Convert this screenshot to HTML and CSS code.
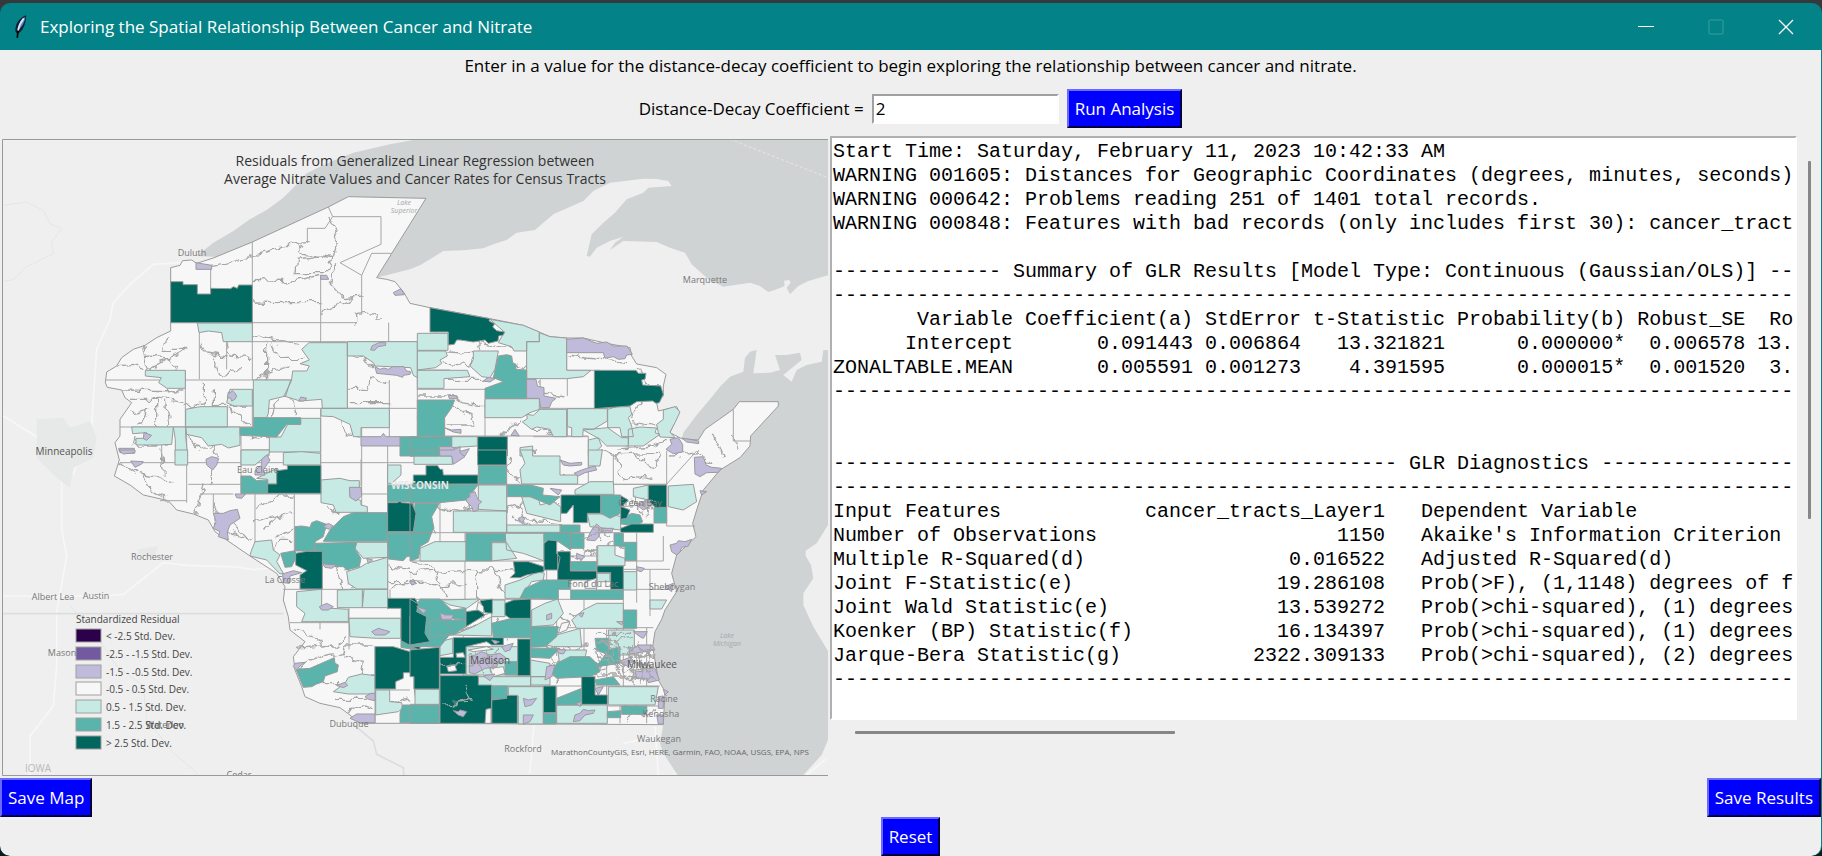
FILE: index.html
```html
<!DOCTYPE html>
<html lang="en">
<head>
<meta charset="utf-8">
<title>Exploring the Spatial Relationship Between Cancer and Nitrate</title>
<link rel="stylesheet" href="styles.css">
</head>
<body>
<div class="window">
  <header class="titlebar">
    <svg class="feather" viewBox="0 0 16 30" aria-hidden="true">
      <path d="M15 1C9 3 3 9 2 16c-1 4 0 7 2 8 6-2 11-12 11-23z" fill="#16202e"/>
      <path d="M14 3C8 7 5 12 4 20c5-3 9-9 10-17z" fill="#4f86d8"/>
      <path d="M12 5C8 10 6 15 5 20" fill="none" stroke="#dce9fa" stroke-width="2"/>
      <path d="M5 20L4 29" fill="none" stroke="#000" stroke-width="2"/>
    </svg>
    <h1 class="title">Exploring the Spatial Relationship Between Cancer and Nitrate</h1>
    <div class="window-controls">
      <button class="ctl" aria-label="Minimize"><svg viewBox="0 0 16 16"><path d="M0 7.500h16" stroke="#fff"/></svg></button>
      <button class="ctl" aria-label="Maximize" disabled><svg viewBox="0 0 16 16"><rect x="1" y="1" width="14" height="14" rx="1" fill="none" stroke="#3a9c9f"/></svg></button>
      <button class="ctl" aria-label="Close"><svg viewBox="0 0 16 16"><path d="M1 1l14 14M15 1L1 15" stroke="#fff" stroke-width="1.300"/></svg></button>
    </div>
  </header>

  <main class="content">
    <p class="intro">Enter in a value for the distance-decay coefficient to begin exploring the relationship between cancer and nitrate.</p>
    <form class="params">
      <label for="coef">Distance-Decay Coefficient =</label>
      <input id="coef" class="entry" type="text" value="2">
      <button type="button" class="btn">Run Analysis</button>
    </form>

    <div class="panes">
      <svg class="map" viewBox="2 139 826 637" role="img" aria-label="Residual map of Wisconsin census tracts">
        <defs>
          <filter id="rough" x="-5%" y="-5%" width="110%" height="110%">
            <feTurbulence type="fractalNoise" baseFrequency="0.035" numOctaves="2" seed="4"/>
            <feDisplacementMap in="SourceGraphic" scale="34" xChannelSelector="R" yChannelSelector="G"/>
          </filter>
        </defs>
        <rect class="land" x="2" y="139" width="826" height="637"/>

        <g transform="translate(410 136) scale(.33333)">
          <path class="water" d="M-640 360L-590 320-530 285-480 250-430 222-380 185-340 145-310 112-240 78-170 50-60 25 30 8H1254V418L1195 435 1165 450 1140 475 1130 455 1142 440 1138 432 1122 434 1124 450 1100 460 1075 468 1050 450 1020 440 940 452 895 430 845 385 825 350 780 335 740 318 640 315 600 342 615 320 640 302 600 315 560 335 540 362 530 360 545 295 580 260 615 230 650 190 700 170 715 155 785 150 775 135 740 129 700 128 600 140 550 165 520 195 430 235 400 260 375 282 320 290 290 312 250 325 220 337 160 343 100 345 60 370 30 388 0 400-100 425-200 380z"/>
          <path class="ferry" d="M960 10L1254 125"/>
        </g>
        <g transform="translate(410 450) scale(.33333)">
          <path class="water" d="M820-52L860-105 900-152 930-190 960-220 1000-235 1005-277 1020-295 1040-300 1030-230 1080-232 1110-240 1095-285 1130-285 1170-292 1175-270 1120-225 1145-205 1160-240 1190-255 1235-265 1240-300H1254V225L1220 280 1187 302 1187 318 1203 345 1210 385 1180 430 1180 465 1210 530 1254 603V870L1235 915 1180 975H803L760 910 750 880 760 822 700 600 760 200z"/>
          <path class="road wide" d="M372 825l-5 60-8 85M640 880l90-20M735 830l10 145M400 905l-50-10M1190 975l60-50"/>
        </g>
        <g transform="translate(0 136) scale(.33333)">
          <path class="river" d="M10 208l70-10 50 25 20 40 35 15-30 40 5 35-60 30-20 8-40 40-30 5"/>
          <path class="road wide" d="M540 380l-80 5-70 60-50 55-10 50-40 90-8 120-10 150M10 840l120 75 90-10 40-20M10 1380h300l60-5 120-95 70 8 150 5 50 8 80-8M185 950l0 230 15 80-30 170 0 160-10 120-70 90v150M195 1010l-60-20-5-60M260 905l-40 110M220 890l60-40"/>
          <path class="city" d="M110 850l80-5 20 30 60-20 20 50-10 60-60 30-10 60-40-30-60-60zM415 1240l60-10-10 30-50-5z"/>
          <path class="river" d="M210 1410l60 60 80 120 80 60 10 100 80 100 70 60 0 50 60 20 30 50"/>
          <path class="border" d="M10 1433H850"/>
          <path class="border" d="M1060 1765l60 50 10 40 80 40 5 70"/>
        </g>

        <g transform="translate(0 136) scale(.33333)">
          <path class="tract w" d="M512 395L540 388 548 374 575 372 590 382 640 366 757 318 985 213 1045 182 1278 187 1130 425 1160 430 1185 437 1212 470 1230 502 1290 515 1470 548 1570 568 1650 602 1700 606 1750 606 1820 622 1890 635 1895 660 1910 684 1970 695 1998 715 1990 750 1990 780 1970 800 1975 825 2030 812 2038 828 2010 890 2045 908 2095 912 2115 880 2200 820 2218 797H2335V810L2252 900 2250 930 2220 965 2160 1002 2110 1062 2090 1122 2078 1162 2088 1202 2030 1257 2015 1312 2030 1367 1995 1422 1985 1450 1965 1487 1958 1532 1975 1632 1995 1667 1990 1766 1230 1762H1080L1050 1737 1020 1715 960 1702 915 1682 905 1652 885 1602 880 1562 915 1517 870 1482 865 1442 850 1392 855 1352 830 1312 750 1260 680 1212 645 1187 625 1152 580 1134 530 1122 505 1094 430 1077 390 1047 343 1020 358 972 345 920 360 900 360 850 395 800 375 785 365 762 322 754 316 740 320 708 350 690 365 665 400 640 435 628 470 605 512 585z"/>
        </g>

        <g class="lines" transform="translate(0 136) scale(.33333)">
          <path d="M757 318V732M512 560H1070M632 388V474M962 418V622M1085 418V535M757 617H1040M1042 617V817M1166 560V617M1042 617H1290M556 703V880M556 732H1042M318 732H556M598 590V730M680 617V700M757 760V873M360 873H760M762 817H1250M962 817V1070M1168 732V902M1085 875V1130M485 900V980M560 873V1100M360 980H725M723 873V1074M725 980H1250M725 1074H963M565 1045H723M765 1074V1220M883 1074V1250M640 1074V1130M963 1074H1163M1163 930V1420M1083 970V1050M560 1094H480M1163 1188H1030M962 1245V1360M850 1360H1163M1047 1415V1540M870 1460H1047M1047 1447H1202M1125 1532V1762M960 1480V1440M1087 1360V1415M1170 1360V1415M1125 1662H1230M985 213L998 242H1143V325L1020 380 1085 418 1115 352H1175M998 242L975 277H922V320M545 873V960M600 1074H700"/>
          <path d="M1252 617V900M1310 590V617M1250 702H1350M1250 760H1455M1455 790V900M1250 845H1330M1580 617V700M1700 606V703H1800M1784 703V820M1455 817H1825M1702 817V900M1702 703V780M1600 902H1765V1045M1290 900H1765M1522 902V960M1840 960V1045H2000M2000 945V1170M1885 880V940M2200 820V915H2250M1995 1050L2090 945M2000 1170H2085M1230 1045H2000M1320 1045V1230M1520 1045V1200M1435 1190H1860M1230 1190H1520M1395 1190V1390M1230 1275H1640M1910 1190V1400M1990 1200V1275H1840M1640 1190V1390M1790 1230V1390M1710 1260H1840M1870 1300H2010M1950 1300V1440M1230 1390H1870M1870 1360H2020M1592 1390V1760M1670 1390V1560M1870 1390V1660M1320 1390V1762M1390 1500V1700M1475 1620V1762M1320 1650H1980M1590 1475H1960M1752 1380V1700M1820 1480V1762M1940 1475V1762M1550 1650V1762M1670 1650V1762M1230 1705H1320M1820 1710H1985M1860 1650V1762M1910 1535V1600"/>
        </g>
        <g class="lines rough" transform="translate(0 136) scale(.33333)">
          <path d="M635 388L690 380 757 362 850 330 920 322M885 410L890 370 960 360 1000 365 1015 290 985 240M757 430L880 435 962 418M757 498L860 500 962 500M895 325L910 355 995 365 985 410 885 410M1010 385L990 440 1030 485 1085 480M965 530L1010 510 1060 485M1070 560V535L1125 530V555H1150M430 630L445 700 556 640M435 660L500 665 530 700M500 610L490 640 556 640M350 690L400 685 430 700M365 762L556 765M390 790L480 790 556 800M470 790V873M395 830L440 820 420 873M500 800L510 870M600 620L610 650 680 660M640 660L660 720 720 700M680 617L690 660 757 665M757 600L820 610 900 625M800 620V730M820 620L840 670 910 670M757 730L830 700 870 690M610 740V800L557 810M640 760L640 812 757 810M683 815L750 870M830 790L810 845M875 790L890 840M1050 660L1080 660 1120 690M1042 760L1100 760 1110 730 1168 740M1042 800L1168 800M1010 845L1040 890 1080 900M405 900L400 930 500 930M565 900L600 940 640 930 650 970M725 900L810 905M610 1040L590 1130M358 975L410 1010 470 1020 520 1040M430 1010L450 1060 500 1090M640 980V1045M480 940L490 1010M650 1100L640 1170 740 1210 765 1200M765 1120L830 1080 880 1080M765 1160L840 1140 880 1130M790 1180L830 1150M740 1210L700 1160M830 1200L880 1180M810 1240L850 1210 880 1210M985 1110L1010 1140M1000 1280L1030 1360M1060 1360L1040 1300M885 1540L1000 1530 1047 1510M900 1590L960 1560 1030 1550 1040 1530 1120 1530M1030 1560L1090 1580 1080 1620 1120 1620M1010 1690L1060 1690 1125 1690M960 1640L1020 1640M1040 1720L1090 1710 1125 1720M1140 1690L1200 1700 1230 1690M1180 1360L1230 1330M1163 1290L1230 1300M1160 1340L1230 1340M880 1480L960 1500 970 1530"/>
          <path d="M1340 645L1440 650 1430 620 1530 640M1320 680L1410 690 1430 660M1340 730L1460 730 1480 720M1250 780L1350 780 1380 800 1455 810M1340 800L1410 830 1415 870 1340 870M1580 700L1545 690M1620 730L1620 770 1700 780M1705 660L1880 680M1915 700L1940 745 1980 750M1890 850L1930 800M1890 860L1980 875M1590 880L1660 880 1650 900M1500 900L1560 850M1850 940L1960 930 2000 910M1810 940L1830 960 1980 955M1850 960L1870 1040 1900 1020 1960 1030M1900 960L1960 990 1980 960M2130 900L2150 915 2170 960M2200 900L2220 940M2010 960L2100 950 2130 990M1530 960L1520 1000 1560 1040M1600 940V1015L1700 1020M1300 1110L1380 1130 1440 1110 1520 1120M1400 1110L1420 1180M1290 1140L1300 1190M1520 1120L1590 1090 1680 1100M1560 1100L1570 1150 1680 1160M1530 1140L1600 1180 1680 1170M1230 1280L1300 1290 1340 1390M1230 1310L1400 1300 1540 1305M1240 1335L1310 1350 1400 1345M1430 1300L1430 1390M1480 1300L1500 1350 1520 1380M1680 1250L1740 1270 1790 1240M1740 1200L1760 1260 1840 1220M1850 1220L1900 1260M1240 1390L1260 1440 1320 1470 1400 1450M1390 1450L1480 1430 1520 1510M1360 1490L1480 1460M1600 1430L1680 1440 1720 1470M1650 1430L1660 1520 1720 1550M1700 1430L1800 1470M1620 1520L1700 1560 1760 1520M1780 1470L1850 1470 1860 1530M1600 1590L1700 1570 1780 1600M1650 1540L1670 1640M1720 1590L1760 1640 1820 1590M1790 1540L1800 1620 1870 1620M1830 1520L1850 1600 1900 1640M1880 1500L1900 1560 1940 1560M1900 1520L1930 1600 1940 1620M1870 1580L1940 1590M1870 1600L1940 1610M1880 1620L1950 1635M1890 1560L1900 1650M1920 1550L1925 1640M1790 1560L1870 1590M1780 1590L1870 1570M1250 1600L1320 1590M1330 1640L1400 1620 1480 1600M1260 1590L1310 1650M1400 1590L1480 1560M1410 1560L1500 1580M1540 1700L1640 1690M1690 1690L1760 1670M1700 1740L1800 1720M1850 1700L1930 1740 1970 1720M1870 1690L1970 1690M1880 1750L1910 1700M1560 1670L1580 1750M1600 1670L1590 1710"/>
        </g>

        <g transform="translate(0 136) scale(.33333)">
          <path class="tract m" d="M592 561H757V617H670L665 590 625 585 597 590zM436 703H556V757H501L476 740 484 725 436 720zM690 760H757V810H702L680 800zM927 620H1042V817H967L965 790 900 795 852 780 874 735 878 705H920L928 690 900 683 928 672 905 640zM760 732H872L857 780 808 792 805 832 800 845H760zM1042 617H1252V725L1240 718 1232 695 1125 690 1120 680 1090 660H1042zM557 820L600 812H682V873H557zM395 873H520L515 925 480 927H408V907H440V890L398 893zM520 873H557V900L563 960H526V910zM557 873H720V928L685 936 665 925 625 930 605 905 560 895zM902 847H962V948H808V903H843L863 865H902zM963 817H1168V875H1083V902H1060L1050 865 1000 842 963 840zM725 942H807V960H725z"/>
          <path class="tract t" d="M760 845H902V865H860L830 903 720 898V874H760zM1200 902H1260V960H1200z"/>
          <path class="tract d" d="M512 437H549V446H592V474H632V457L692 458 700 452 712 457 716 447H757V560H512z"/>
          <path class="tract p" d="M588 380L635 388V400H588zM962 418H980L986 430H962zM1180 470L1203 458 1213 476 1185 478zM1112 642L1116 630 1137 620H1157V628L1134 632 1124 643zM1125 692L1140 700 1152 696 1165 700 1178 692 1212 692 1218 704 1233 708 1230 715 1210 718 1208 724 1190 718 1130 712zM685 768L690 772 697 763 704 770 710 780 705 790 695 795 692 786 682 785zM895 795L903 783 921 787 912 795zM1083 902H1143L1150 892 1158 902H1200V930H1083zM356 937H403V952L360 950zM432 890L455 898 440 913 430 908z"/>
        </g>

        <g transform="translate(410 136) scale(.33333)">
          <path class="tract m" d="M22 592H114V643H22zM240 550L340 568 388 588V617H350V645H312L305 632 265 620 283 588zM350 617H388V590L420 602 470 606V703H543L520 722 470 728H350zM22 645H107L112 660 90 672 95 682 77 695 22 702zM22 703H172L180 722 102 728V757H22zM190 645H265L255 700 240 725 215 722 180 690 190 670zM225 788H388V820L360 830 335 845H225zM337 858L352 848 350 835 370 838 390 820H470V902H430L420 880 380 873 365 880zM472 818H592V855L550 880 520 878 518 902H485V875L472 872zM593 820L620 812 660 812 665 835 655 845 665 870 670 902H635L630 875H593zM520 882L593 875 635 905 655 905V930H590L570 910zM655 880L690 873 740 876 735 890 750 895 700 930H655zM745 890L740 865 760 850 760 822 795 812 810 828 795 860 780 888 795 905 750 903zM125 902H202V930L125 935zM535 912L565 905 575 930 560 945V960H535zM330 935L368 930V960H330z"/>
          <path class="tract t" d="M265 660L290 656 305 660 308 680 318 685 318 700 350 702V788H225V757L280 737 250 725 258 690zM22 792H134L125 815 104 845V900H22zM0 902H125V932H88V960H0z"/>
          <path class="tract d" d="M60 515L240 548 237 555 254 563 248 573 260 584 284 588 280 597 266 600 264 615 235 622 225 612 190 618 150 612 140 612 133 625 115 627V588H60zM553 703H678L685 712 708 712 705 730 695 732 698 747 752 750 760 775 748 800 738 802 728 795 680 797 660 810 553 818zM203 902H292V960H203z"/>
          <path class="tract p" d="M470 610L520 606 560 622 590 618 610 630 650 630 658 640 667 655 650 657 645 668 625 670 610 662 585 667 580 650H470zM350 730H378L382 750 402 755 402 780 438 787 425 798 418 815H392L388 787H350zM88 932H125L140 942 155 945 178 938 165 960H88zM768 940L785 925 780 910 805 905 818 925V948L790 953zM815 906L866 915V923L830 918zM115 778L142 780 140 788H118zM105 876L125 882 153 880V892L130 888zM303 898L315 880 328 900zM220 735L235 724 255 728 240 738z"/>
        </g>

        <g transform="translate(0 450) scale(.33333)">
          <path class="tract m" d="M525 0H563V45H525zM723 0H808V10L765 45H723zM850 8L905 5 962 10V45H850zM770 85L830 55V102H803V88zM963 90L1020 85 1050 92 1078 92V115H1050V140L1083 152V165L1102 170V187H1008L1000 165 963 158zM1163 45H1203V75L1175 100H1163zM753 305L765 275 815 270 820 300 840 315 830 335 850 370 840 372 800 330 750 318zM1070 277H1163V322L1090 325 1065 295zM1040 365L1080 352 1100 340 1163 322V417H1070L1045 400zM890 425L965 418V473L1045 478V515H905L915 490 890 470zM1012 420L1087 418V473H1012zM1092 418H1163V473H1087zM1047 505H1202V565H1130L1050 560zM1000 725L1035 700 1045 682 1085 672 1125 677V732H1045zM1127 720H1169V755L1205 758 1208 775 1195 785 1127 795zM1243 720H1260V765H1250z"/>
          <path class="tract t" d="M723 78H752L770 92 803 90V130H723zM1030 200L1060 188H1163V274H970L990 240zM885 230L905 228 930 232 935 218 950 212 985 225 975 240 970 260 945 275 945 303H885zM945 280L1070 277 1065 297 1083 325 1078 350 1040 360 1030 350 1010 350 967 340V305L945 302zM1163 247H1260V312L1220 320 1210 332 1165 327zM1163 105H1260V155H1163zM842 310L885 302 890 320 875 350 855 352zM888 658L930 655 1003 623 1005 640 1015 645 1012 665 975 678 970 695 950 702 935 710 910 712zM1203 572H1260V602L1203 592zM1208 765H1260V818H1200V790z"/>
          <path class="tract d" d="M803 102H830V62L862 58V46H963V130H803zM887 310L920 304H967V417H900V375L920 362 887 345zM1163 158H1190L1200 154 1205 158 1240 160 1238 180 1250 190 1245 210 1238 245H1163zM1163 445H1245L1260 470V602L1203 572V475H1163zM1125 590H1180L1230 605 1260 602V718H1242V668H1210V685L1187 695V717H1125z"/>
          <path class="tract p" d="M618 28L635 20 656 25 650 45 638 60 620 45zM392 33L430 35 425 42 405 52zM356 0H405V8L370 12zM765 62L785 45 785 28 800 15 810 30 800 45 790 60 795 75 765 75zM640 190L670 190 690 182 712 178 720 205 690 225 682 245 685 270 655 260 660 245 640 235 648 215zM705 132H737L725 145 710 143zM1048 112L1083 112 1085 138 1068 153 1050 142zM970 230L985 220 1000 228 987 238zM968 342L1010 345 995 355 975 352zM958 470L980 460 1000 470 985 480 965 480zM1115 545L1135 535 1170 545 1155 555 1125 555zM880 650L885 640 915 637 900 648 890 660zM1050 805L1070 792H1125V818H1080zM1095 740L1112 730H1125V752L1105 748zM1010 706L1035 697 1043 706 1030 713zM848 372L880 362 905 368 870 378 868 400 850 398zM1228 395L1240 388 1247 398 1237 405zM1100 325L1118 330 1105 340z"/>
        </g>

        <g transform="translate(410 450) scale(.33333)">
          <path class="tract m" d="M12 18H127V43H12zM205 105H290V183L205 178zM130 183H290V247H130zM290 225H450V247H290zM330 0H368V18H450V75H503V102H335L330 60 345 40zM535 0H577L570 48H535zM495 120L540 95 610 95 612 133H495zM335 140H385L390 165 430 155 452 170V215L350 190zM670 115L715 105V150L670 140zM775 108L850 103 860 155 820 180 775 170zM532 192H605L632 200V240L540 230zM30 295L75 275H168V333H30zM285 250H402V333L340 310 290 300zM245 278H290L320 325 245 333zM563 287H615V315L645 325V347H563zM640 365H680V420H640zM285 405L330 390 385 365 403 370 400 390 365 395 330 445H285zM245 450H285V500H245zM90 450L210 447 170 475 120 465zM365 480L405 460 443 447 460 490 430 525 365 530zM485 510L520 480 560 460H640V535H500zM720 450H770L755 477H720zM90 575L128 565V610L90 617zM130 555L190 530 245 500V558zM168 590H323V675H168zM410 585L440 555 510 535 515 590H430zM443 600L530 600 520 650H450zM205 680H362V708H205zM362 680H420V705H362zM15 718H88V763H15zM295 710H400V822H325V738H295zM440 765H592V820H440zM595 710H745L735 765H595zM595 540H673V615H600zM362 630L420 640 415 680H362zM561 370H600V395H561z"/>
          <path class="tract t" d="M0 0H88V18H0zM205 47H290V102H205zM0 103H205L170 150 88 158H0zM15 160H88L65 200 72 235 65 248H8zM292 105H362L400 115 398 135 450 140 420 165 360 140H292zM572 135H632V190L600 205 572 190zM732 172H770V219H732zM632 210L665 190 690 195 698 215 680 227 632 222zM452 225H510V247H452zM0 248H65L55 275 30 290 25 325 0 333zM168 250H286V275H245V333H168zM402 248H482V300L445 275H402zM482 250H522V295H482zM612 250H640V277H680V332H645V290L612 287zM482 335H560V362H482zM330 445L345 415 400 390H482V418H445V448zM482 420H640V448H482zM640 480H680V535H640zM30 447H90L125 480 168 475V510L90 500 130 540 90 590H0V500zM60 510H165L180 520 130 555 60 560zM245 520L305 505H362V563H250zM362 530H445L440 560 405 590 362 592zM362 595H450L420 625 362 622zM440 640L480 620H540L560 640 570 665 540 680 440 685 425 670zM285 635H323V675H285zM245 708H292V748H245zM440 745L515 715V765H440zM400 790H438V822H400zM555 565H595V615L560 600zM595 600L630 590V640L560 650zM0 765H88V820H0zM635 768H710V793H635zM592 785L632 782V803H592zM555 690L610 680 630 705H560z"/>
          <path class="tract d" d="M203 0H290V45H203zM10 75H48V47H83L90 58 98 58 100 75H204V102H10zM0 158L8 165 18 190 10 245H0zM453 135H572V190H532V218H490V165L470 190H453zM715 105H770V172H735L715 150zM632 137L655 150 635 170 660 180 650 205 632 208zM632 235L665 222H730V247H632zM402 280L415 270 440 272V310L450 322 443 360H402zM310 335L355 335 402 350V365L350 375 330 383H300L315 370zM443 305H481V363H560V390H443zM561 348H640V418H602V368H561zM210 452L247 447V490L225 488zM285 460L310 450 362 447V505H300L285 495zM168 485L205 480 225 495 168 530zM0 447L25 462 20 485 50 500 45 550 60 575 0 585zM130 563H280V585H245L230 575 168 590V672H90V622H130zM323 567H361V677H323zM0 600L88 592V717H12V680H0zM90 677H205V705H245V820H90zM245 750L290 745V736H322V820H245zM400 708H438V788H400zM515 680H555V735H592V763H515z"/>
          <path class="tract w" d="M138 610L160 608 165 622 140 622zM110 648L135 645 140 662 115 665zM228 778L243 775V820H225zM205 455L220 470 222 490 200 478zM455 520L480 515 470 540 445 550zM525 395L560 385V415H525zM175 600L230 590 250 598 190 605zM240 655L280 650 285 670 250 680z"/>
          <path class="tract p" d="M88 0H130L150-10 150 8 165 20 150 30 130 43 125 18H90zM170 145L180 140 178 130 195 125 200 140 205 150 215 155 205 165 205 180 190 185 185 170 170 155zM450 30L480 40 515 37V45L480 48 460 45zM492 70L510 62 530 55 555 48 560 60 525 68 505 78zM853 22L880 20 888 45 905 52 935 55 925 67 890 68 870 80 855 72zM780 285L800 280 805 272 825 275 845 268 835 288 815 292 810 305 800 315 785 305zM560 222L575 235 610 235 605 248 570 248 565 262 555 272 530 270 545 240zM680 350L703 355 695 365 682 362zM500 310L525 320 515 328 500 325zM340 745L355 750 380 745 365 765 345 770zM340 795L370 795 360 815 340 822zM495 795L510 790 520 778 535 782 555 780 550 790 525 795 510 812 490 815zM130 782L145 785 150 780 170 785 160 800 145 795zM90 488L105 495 130 495 125 508 95 508zM20 470L50 480 40 490zM178 620L195 615 215 605 240 615 270 610 290 625 265 640 260 650 225 655 195 672 178 668zM410 650L435 645 425 680 405 690zM275 590L310 580 300 600 285 605zM325 205L335 200 345 205 335 220zM420 115L455 120 445 135zM680 165L710 150 725 165 700 180zM655 590L670 595 685 585 725 585 735 600 705 605 660 612zM675 662L695 665 705 655 735 655 748 690 715 698 710 685 680 685zM625 635L665 620 655 650zM745 740L760 738V775H745zM740 795H760V822H745zM410 495L425 490 425 505 410 510zM505 492L522 488 515 502zM220 678L255 672 240 692zM500 760L515 755 510 770zM440 598L468 600 460 612 448 610zM245 570L268 575 255 582zM670 545L712 545 700 565 690 560zM765 410L790 400 785 425zM760 718L775 725 765 735zM555 715L580 710 565 735zM620 515L640 515 635 525zM0 390L20 400 5 405zM870 122L890 125 875 135z"/>
        </g>
        <g class="lines rough" transform="translate(410 450) scale(.33333)">
          <path d="M175 620L290 640M180 650L270 600M200 605L215 670M230 600L240 665M260 610L250 655M550 600L640 640M560 570L640 600M570 620L630 660M600 560L610 640M640 590L730 600M645 610L730 625M650 630L735 650M660 655L735 665M660 580L670 690M690 570L700 690M715 580L725 690M670 680L735 690M585 600L600 650M620 570L640 670M540 230L600 260M560 220L570 270M520 260L610 245M655 150L730 180M670 140L690 190M700 140L710 200M640 170L730 160M560 550H660M565 580L660 560M90 645L165 640M165 760L100 765M165 705L180 745 130 770"/>
        </g>

        <g class="legend">
          <rect class="d3" x="76" y="629" width="25" height="13"/>
          <rect class="d2" x="76" y="647" width="25" height="13"/>
          <rect class="p" x="76" y="665" width="25" height="13"/>
          <rect class="w" x="76" y="682" width="25" height="13"/>
          <rect class="m" x="76" y="700" width="25" height="13"/>
          <rect class="t" x="76" y="718" width="25" height="13"/>
          <rect class="d" x="76" y="736" width="25" height="13"/>
        </g>

        <g class="heading">
          <text x="415" y="166">Residuals from Generalized Linear Regression between</text>
          <text x="415" y="184">Average Nitrate Values and Cancer Rates for Census Tracts</text>
        </g>
        <g class="place">
          <text x="192" y="256">Duluth</text>
          <text x="705" y="283">Marquette</text>
          <text x="152" y="560">Rochester</text>
          <text x="53" y="600">Albert Lea</text>
          <text x="96" y="599">Austin</text>
          <text x="62" y="656">Mason</text>
          <text x="285" y="583">La Crosse</text>
          <text x="258" y="473">Eau Claire</text>
          <text x="349" y="727">Dubuque</text>
          <text x="165" y="728">Waterloo</text>
          <text x="523" y="752">Rockford</text>
          <text x="659" y="742">Waukegan</text>
          <text x="664" y="702">Racine</text>
          <text x="661" y="717">Kenosha</text>
          <text x="672" y="590">Sheboygan</text>
          <text x="593" y="587">Fond du Lac</text>
          <text x="640" y="506">Green Bay</text>
          <text x="239" y="778">Cedar</text>
        </g>
        <g class="place big">
          <text x="64" y="455">Minneapolis</text>
          <text x="490" y="664">Madison</text>
          <text x="652" y="668">Milwaukee</text>
        </g>
        <g class="lake">
          <text x="404" y="205">Lake</text>
          <text x="404" y="213">Superior</text>
          <text x="727" y="638">Lake</text>
          <text x="727" y="646">Michigan</text>
        </g>
        <text class="state" x="38" y="772">IOWA</text>
        <text class="state light" x="420" y="489">WISCONSIN</text>
        <g class="key">
          <text x="76" y="623">Standardized Residual</text>
          <text x="106" y="640">&lt; -2.5 Std. Dev.</text>
          <text x="106" y="658">-2.5 - -1.5 Std. Dev.</text>
          <text x="106" y="676">-1.5 - -0.5 Std. Dev.</text>
          <text x="106" y="693">-0.5 - 0.5 Std. Dev.</text>
          <text x="106" y="711">0.5 - 1.5 Std. Dev.</text>
          <text x="106" y="729">1.5 - 2.5 Std. Dev.</text>
          <text x="106" y="747">&gt; 2.5 Std. Dev.</text>
        </g>
        <text class="credit" x="551" y="755">MarathonCountyGIS, Esri, HERE, Garmin, FAO, NOAA, USGS, EPA, NPS</text>
        <path class="frame" d="M828 139.500H2.500V775.500H828"/>
      </svg>

      <div class="results">
        <textarea class="output" rows="24" wrap="off" readonly aria-label="Analysis results">Start Time: Saturday, February 11, 2023 10:42:33 AM
WARNING 001605: Distances for Geographic Coordinates (degrees, minutes, seconds)
WARNING 000642: Problems reading 251 of 1401 total records.
WARNING 000848: Features with bad records (only includes first 30): cancer_tract

-------------- Summary of GLR Results [Model Type: Continuous (Gaussian/OLS)] --
--------------------------------------------------------------------------------
       Variable Coefficient(a) StdError t-Statistic Probability(b) Robust_SE  Ro
      Intercept       0.091443 0.006864   13.321821      0.000000*  0.006578 13.
ZONALTABLE.MEAN       0.005591 0.001273    4.391595      0.000015*  0.001520  3.
--------------------------------------------------------------------------------


----------------------------------------------- GLR Diagnostics ----------------
--------------------------------------------------------------------------------
Input Features            cancer_tracts_Layer1   Dependent Variable             
Number of Observations                    1150   Akaike's Information Criterion 
Multiple R-Squared(d)                 0.016522   Adjusted R-Squared(d)          
Joint F-Statistic(e)                 19.286108   Prob(&gt;F), (1,1148) degrees of f
Joint Wald Statistic(e)              13.539272   Prob(&gt;chi-squared), (1) degrees
Koenker (BP) Statistic(f)            16.134397   Prob(&gt;chi-squared), (1) degrees
Jarque-Bera Statistic(g)           2322.309133   Prob(&gt;chi-squared), (2) degrees
--------------------------------------------------------------------------------
</textarea>
        <div class="vtrack"><div class="vthumb"></div></div>
        <div class="htrack"><div class="hthumb"></div></div>
      </div>
    </div>

    <div class="save-row">
      <button type="button" class="btn">Save Map</button>
      <button type="button" class="btn">Save Results</button>
    </div>
    <div class="reset-row">
      <button type="button" class="btn">Reset</button>
    </div>
  </main>
</div>
</body>
</html>
```
FILE: styles.css
```css
* { box-sizing: border-box; }

body {
  margin: 0;
  min-height: 100vh;
  padding-top: 3px;
  background: linear-gradient(#36393c 50%, #101a1c 50%);
  color: #000;
  font-family: "Open Sans", "Noto Sans", sans-serif;
  font-size: 17px;
}

.window {
  min-height: calc(100vh - 3px);
  display: flex;
  flex-direction: column;
  padding-right: 1px;
  background: #038387;
  border-radius: 10px;
  overflow: hidden;
}

.titlebar {
  display: flex;
  align-items: center;
  height: 47px;
  padding-left: 14px;
  gap: 13px;
  color: #fff;
}
.feather { width: 13px; height: 25px; }
.title { margin: 0; font-size: 17px; font-weight: 400; flex: 1; }
.window-controls { display: flex; }
.ctl {
  width: 70px;
  height: 47px;
  padding: 0;
  border: 0;
  background: none;
  display: grid;
  place-items: center;
}
.ctl svg { width: 16px; height: 16px; }

.content {
  flex: 1;
  display: flex;
  flex-direction: column;
  background: #efefef;
  border-radius: 0 0 10px 10px;
}

.intro { margin: 3px 0 0; line-height: 26px; text-align: center; }

.params {
  display: flex;
  justify-content: center;
  align-items: center;
  gap: 8px;
  margin: 10px 0 8px;
}
.entry {
  width: 187px;
  height: 30px;
  padding: 0 2px;
  font: inherit;
  background: #fff;
  border: 2px solid;
  border-color: #a0a0a0 #fff #fff #a0a0a0;
  border-radius: 0;
}
.btn {
  height: 39px;
  padding: 0 6px;
  font: inherit;
  color: #fff;
  background: #00f;
  border: 2px solid;
  border-color: #6a6aff #000040 #000040 #6a6aff;
  border-radius: 0;
}

.panes {
  display: grid;
  grid-template-columns: 830fr 991fr;
  align-items: start;
}
.map { display: block; width: 100%; padding: 3px 2px 0 2px; }

.land { fill: #efefef; }
.water { fill: #cfd3d4; }
.ferry { fill: none; stroke: #e4e0da; stroke-width: 4; stroke-dasharray: 9 6; }
.river { fill: none; stroke: #e3e6e6; stroke-width: 3; }
.border { fill: none; stroke: #dcdedb; stroke-width: 5; }
.road { fill: none; stroke: #f7f7f7; stroke-width: 5; }
.city { fill: #e6e9e8; }
.tract { stroke: #9b9b9b; stroke-width: 3; stroke-linejoin: round; }
.lines { fill: none; stroke: #a6a6a6; stroke-width: 3; }
.rough { filter: url(#rough); stroke-width: 4; }
.w { fill: #f7f7f7; }
.m { fill: #c7eae4; }
.t { fill: #5ab4ab; }
.d { fill: #01665e; }
.p { fill: #c0bbdb; }
.d2 { fill: #7359a0; }
.d3 { fill: #2d004b; }
.legend rect { stroke: #a0a0a0; stroke-width: 1; }
.frame { fill: none; stroke: #999; stroke-width: 1; }

.heading { font-size: 14px; fill: #333; text-anchor: middle; }
.place { font-size: 9px; fill: #777; text-anchor: middle; }
.big { font-size: 10px; fill: #555; }
.lake { font-size: 7px; font-style: italic; fill: #a3a9ab; text-anchor: middle; }
.state { font-size: 10px; fill: #b9b9b9; text-anchor: middle; }
.light { fill: #e4e8e7; font-weight: 700; }
.key { font-size: 10px; fill: #444; }
.credit { font-size: 8px; fill: #666; }

.results {
  display: grid;
  grid-template-columns: 1fr 24px;
  grid-template-rows: auto 24px;
}
.output {
  display: block;
  width: 100%;
  height: 584px;
  margin: 0;
  padding: 2px 0 0 1px;
  border: 2px solid;
  border-color: #b0b0b0 #fff #fff #b0b0b0;
  border-radius: 0;
  background: #fff;
  color: #000;
  font: 20px/24px "Liberation Mono", "Courier New", monospace;
  white-space: pre;
  overflow: hidden;
  resize: none;
  outline: 0;
}
.vtrack { display: flex; justify-content: center; padding-top: 25px; }
.vthumb { width: 3px; height: 64%; background: #868686; border-radius: 1px; }
.htrack { display: flex; align-items: center; padding-left: 25px; }
.hthumb { width: 34%; height: 3px; background: #868686; border-radius: 1px; }

.save-row { display: flex; justify-content: space-between; margin-top: 2px; }
.reset-row { display: flex; justify-content: center; }
```
